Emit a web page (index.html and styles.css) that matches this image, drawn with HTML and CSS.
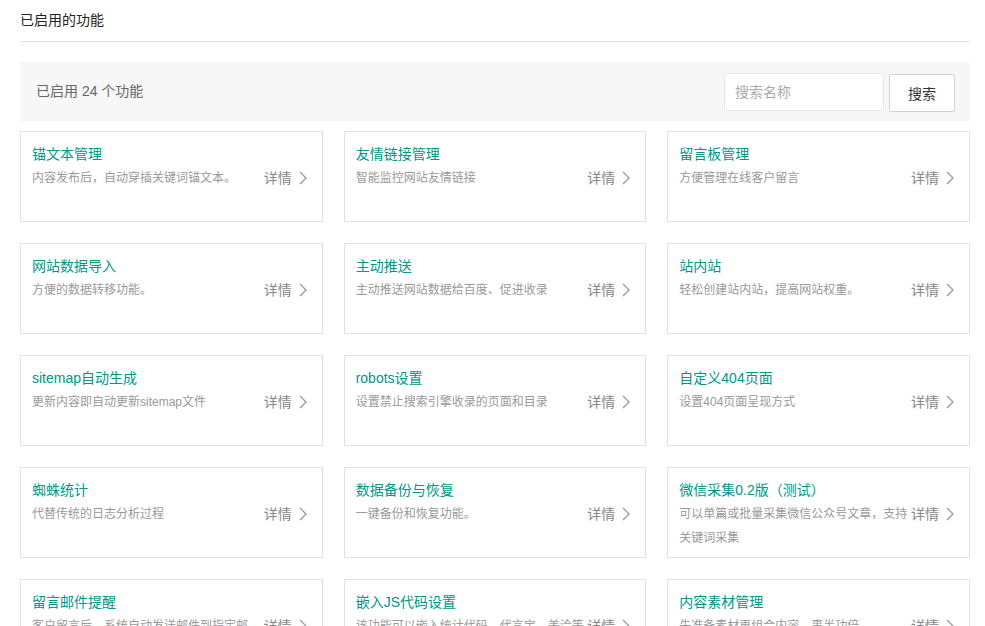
FILE: index.html
```html
<!DOCTYPE html>
<html lang="zh-CN">
<head>
<meta charset="utf-8">
<title>已启用的功能</title>
<link rel="stylesheet" href="styles.css">
</head>
<body>
<div class="page">
  <div class="page-title">已启用的功能</div>
  <div class="toolbar">
    <div class="count">已启用 24 个功能</div>
    <form class="search" onsubmit="return false">
      <input class="search-input" type="text" placeholder="搜索名称">
      <button class="search-btn" type="button">搜索</button>
    </form>
  </div>
  <div class="grid">
    <div class="card"><div class="card-title">锚文本管理</div><div class="card-row"><div class="card-desc">内容发布后，自动穿插关键词锚文本。</div><a class="detail">详情<svg class="chev" viewBox="0 0 8 14" width="8" height="14"><polyline points="1,1 7,7 1,13"/></svg></a></div></div>
    <div class="card"><div class="card-title">友情链接管理</div><div class="card-row"><div class="card-desc">智能监控网站友情链接</div><a class="detail">详情<svg class="chev" viewBox="0 0 8 14" width="8" height="14"><polyline points="1,1 7,7 1,13"/></svg></a></div></div>
    <div class="card"><div class="card-title">留言板管理</div><div class="card-row"><div class="card-desc">方便管理在线客户留言</div><a class="detail">详情<svg class="chev" viewBox="0 0 8 14" width="8" height="14"><polyline points="1,1 7,7 1,13"/></svg></a></div></div>

    <div class="card"><div class="card-title">网站数据导入</div><div class="card-row"><div class="card-desc">方便的数据转移功能。</div><a class="detail">详情<svg class="chev" viewBox="0 0 8 14" width="8" height="14"><polyline points="1,1 7,7 1,13"/></svg></a></div></div>
    <div class="card"><div class="card-title">主动推送</div><div class="card-row"><div class="card-desc">主动推送网站数据给百度、促进收录</div><a class="detail">详情<svg class="chev" viewBox="0 0 8 14" width="8" height="14"><polyline points="1,1 7,7 1,13"/></svg></a></div></div>
    <div class="card"><div class="card-title">站内站</div><div class="card-row"><div class="card-desc">轻松创建站内站，提高网站权重。</div><a class="detail">详情<svg class="chev" viewBox="0 0 8 14" width="8" height="14"><polyline points="1,1 7,7 1,13"/></svg></a></div></div>

    <div class="card"><div class="card-title">sitemap自动生成</div><div class="card-row"><div class="card-desc">更新内容即自动更新sitemap文件</div><a class="detail">详情<svg class="chev" viewBox="0 0 8 14" width="8" height="14"><polyline points="1,1 7,7 1,13"/></svg></a></div></div>
    <div class="card"><div class="card-title">robots设置</div><div class="card-row"><div class="card-desc">设置禁止搜索引擎收录的页面和目录</div><a class="detail">详情<svg class="chev" viewBox="0 0 8 14" width="8" height="14"><polyline points="1,1 7,7 1,13"/></svg></a></div></div>
    <div class="card"><div class="card-title">自定义404页面</div><div class="card-row"><div class="card-desc">设置404页面呈现方式</div><a class="detail">详情<svg class="chev" viewBox="0 0 8 14" width="8" height="14"><polyline points="1,1 7,7 1,13"/></svg></a></div></div>

    <div class="card"><div class="card-title">蜘蛛统计</div><div class="card-row"><div class="card-desc">代替传统的日志分析过程</div><a class="detail">详情<svg class="chev" viewBox="0 0 8 14" width="8" height="14"><polyline points="1,1 7,7 1,13"/></svg></a></div></div>
    <div class="card"><div class="card-title">数据备份与恢复</div><div class="card-row"><div class="card-desc">一键备份和恢复功能。</div><a class="detail">详情<svg class="chev" viewBox="0 0 8 14" width="8" height="14"><polyline points="1,1 7,7 1,13"/></svg></a></div></div>
    <div class="card"><div class="card-title">微信采集0.2版（测试）</div><div class="card-row"><div class="card-desc">可以单篇或批量采集微信公众号文章，支持关键词采集</div><a class="detail">详情<svg class="chev" viewBox="0 0 8 14" width="8" height="14"><polyline points="1,1 7,7 1,13"/></svg></a></div></div>

    <div class="card"><div class="card-title">留言邮件提醒</div><div class="card-row"><div class="card-desc">客户留言后，系统自动发送邮件到指定邮箱。</div><a class="detail">详情<svg class="chev" viewBox="0 0 8 14" width="8" height="14"><polyline points="1,1 7,7 1,13"/></svg></a></div></div>
    <div class="card"><div class="card-title">嵌入JS代码设置</div><div class="card-row"><div class="card-desc">该功能可以嵌入统计代码、代言宝、美洽等代码</div><a class="detail">详情<svg class="chev" viewBox="0 0 8 14" width="8" height="14"><polyline points="1,1 7,7 1,13"/></svg></a></div></div>
    <div class="card"><div class="card-title">内容素材管理</div><div class="card-row"><div class="card-desc">先准备素材再组合内容，事半功倍</div><a class="detail">详情<svg class="chev" viewBox="0 0 8 14" width="8" height="14"><polyline points="1,1 7,7 1,13"/></svg></a></div></div>
  </div>
</div>
</body>
</html>
```

FILE: styles.css
```css
* { box-sizing: border-box; }
html, body { margin: 0; padding: 0; background: #fff; }
body {
  font-family: "Liberation Sans", "Noto Sans CJK SC", sans-serif;
  font-size: 14px;
  color: #333;
}
.page { padding: 0 15px 20px 20px; }
.page-title {
  height: 42px;
  line-height: 40px;
  font-size: 14px;
  color: #222;
  border-bottom: 1px solid #e2e2e2;
}
.toolbar {
  margin-top: 20px;
  height: 59px;
  background: #f7f7f7;
  display: flex;
  align-items: center;
  justify-content: space-between;
  padding: 0 15px 0 16px;
}
.count {
  color: #666;
  font-size: 14px;
  line-height: 20px;
  margin-bottom: 2px;
}
.search { display: flex; align-items: center; gap: 5px; margin: 0; }
.search-input {
  width: 160px;
  height: 38px;
  border: 1px solid #e6e6e6;
  background: #fff;
  padding: 0 10px;
  font: inherit;
  font-size: 14px;
  color: #333;
  outline: none;
  border-radius: 2px;
}
.search-input::placeholder { color: #aaa; }
.search-btn {
  width: 66px;
  height: 38px;
  margin-top: 2px;
  border: 1px solid #d2d2d2;
  background: #fff;
  font: inherit;
  font-size: 14px;
  color: #333;
  border-radius: 2px;
  padding: 0;
}
.grid {
  margin-top: 10px;
  display: grid;
  grid-template-columns: repeat(3, 1fr);
  column-gap: 21px;
  row-gap: 21px;
}
.card {
  height: 91px;
  border: 1px solid #e2e2e2;
  padding: 10px 15px 0 11px;
  overflow: hidden;
  background: #fff;
}
.card-title {
  color: #009688;
  font-size: 14px;
  line-height: 24px;
}
.card-row { display: flex; align-items: flex-start; }
.card-desc {
  flex: 1;
  min-width: 0;
  font-size: 12px;
  line-height: 24px;
  color: #999;
}
.detail {
  flex: none;
  display: flex;
  align-items: center;
  margin-left: 2px;
  line-height: 24px;
  font-size: 14px;
  color: #888;
}
.chev {
  margin-left: 7px;
  fill: none;
  stroke: #999;
  stroke-width: 1.3;
}
```
